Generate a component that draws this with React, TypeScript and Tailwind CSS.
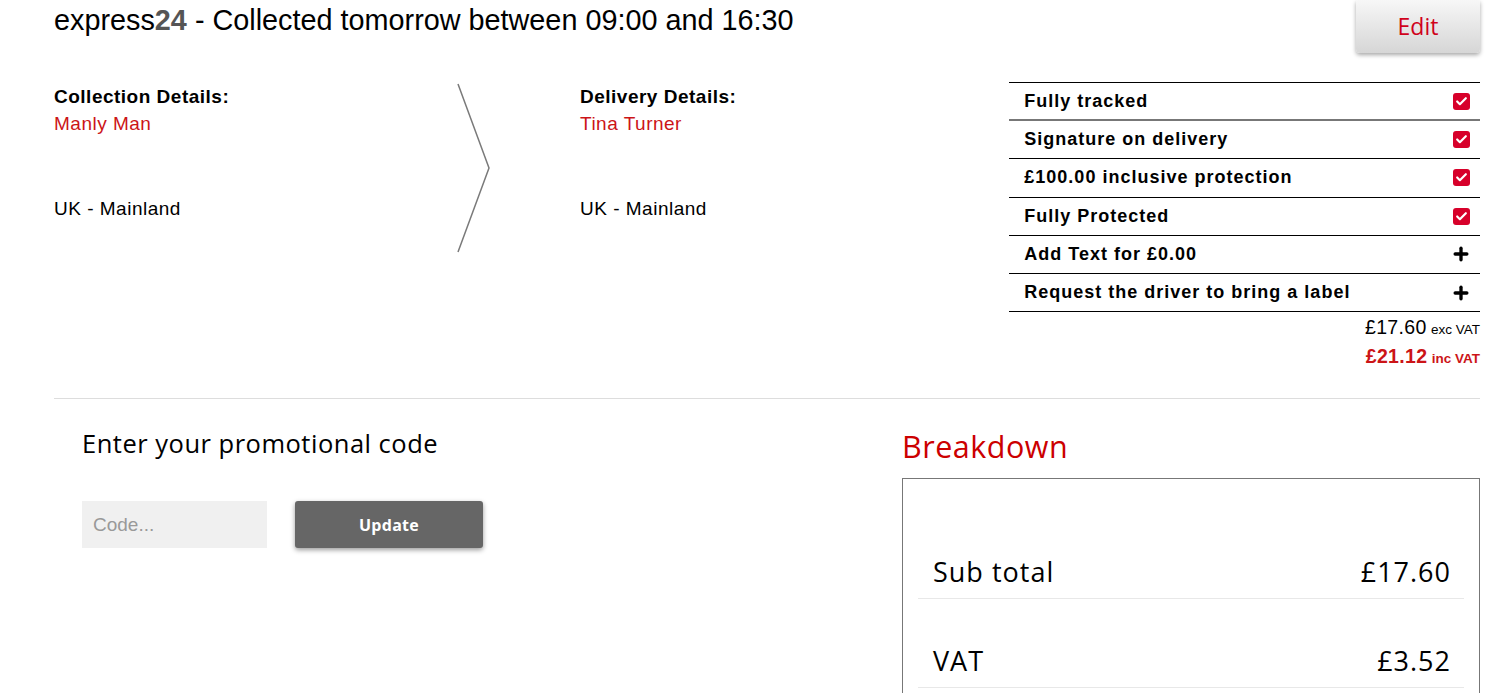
import { Check, Plus } from 'lucide-react';

const options = [
  { label: 'Fully tracked', checked: true },
  { label: 'Signature on delivery', checked: true },
  { label: '£100.00 inclusive protection', checked: true },
  { label: 'Fully Protected', checked: true },
  { label: 'Add Text for £0.00', checked: false },
  { label: 'Request the driver to bring a label', checked: false },
];

function Chevron() {
  return (
    <svg width="40" height="172" viewBox="0 0 40 172" className="shrink-0">
      <path d="M4 2 L35 86 L4 170" fill="none" stroke="#7a7a7a" strokeWidth="1.5" />
    </svg>
  );
}

function Address({ title, name, region }: { title: string; name: string; region: string }) {
  return (
    <div className="flex flex-col tracking-[0.5px]">
      <div className="text-[19px] font-bold leading-[22px] text-black">{title}</div>
      <div className="mt-[5px] text-[19px] leading-[22px] text-[#cc1417]">{name}</div>
      <div className="mt-[63px] text-[19px] leading-[22px] text-black">{region}</div>
    </div>
  );
}

export default function App() {
  return (
    <div className="min-h-screen bg-white pl-[54px] pr-[20px] font-['Liberation_Sans',Arial,sans-serif] text-black">
      {/* top section */}
      <div className="flex justify-between">
        <h1 className="pt-[4px] text-[28.8px] leading-[32px] font-normal">
          express<span className="font-bold text-[#555]">24</span> - Collected tomorrow between 09:00 and 16:30
        </h1>
        <button className="h-[53px] w-[124px] rounded-b-[4px] rounded-t-[2px] bg-gradient-to-b from-[#f7f7f7] to-[#d6d6d6] text-[23px] text-[#d0021b] shadow-[0_2px_4px_rgba(0,0,0,0.35)] font-['Open_Sans',sans-serif]">
          Edit
        </button>
      </div>

      <div className="mt-[29px] flex">
        <div className="flex w-[956px]">
          <div className="w-[400px] pt-[4px]">
            <Address title="Collection Details:" name="Manly Man" region="UK - Mainland" />
          </div>
          <Chevron />
          <div className="ml-[86px] pt-[4px]">
            <Address title="Delivery Details:" name="Tina Turner" region="UK - Mainland" />
          </div>
        </div>

        <div className="w-[471px]">
          <div className="border-t-[1.5px] border-black">
            {options.map((o, i) => (
              <div
                key={o.label}
                className={`flex h-[38.2px] items-center justify-between pl-[15px] pr-[10px] ${
                  i === 0 ? 'border-b-[2px] border-[#777]' : 'border-b-[1.5px] border-black'
                }`}
              >
                <span className="text-[18px] font-bold tracking-[1px]">{o.label}</span>
                {o.checked ? (
                  <span className="flex h-[17px] w-[17px] items-center justify-center rounded-[3px] bg-[#d7002a]">
                    <Check size={13} strokeWidth={4} className="text-white" />
                  </span>
                ) : (
                  <Plus size={20} strokeWidth={4} className="mr-[-1px] text-black" />
                )}
              </div>
            ))}
          </div>
          <div className="mt-[2px] text-right leading-[26px]">
            <div>
              <span className="text-[19.5px] tracking-[0.3px]">£17.60</span>{' '}
              <span className="text-[13.5px]">exc VAT</span>
            </div>
            <div className="font-bold text-[#cc1417]">
              <span className="text-[19.5px] tracking-[0.3px]">£21.12</span>{' '}
              <span className="text-[13.5px]">inc VAT</span>
            </div>
          </div>
        </div>
      </div>

      <div className="mt-[26px] border-t border-[#dddddd]" />

      {/* lower section */}
      <div className="flex font-['Open_Sans',sans-serif]">
        <div className="w-[848px] pl-[28px]">
          <h2 className="mt-[28px] text-[25.5px] leading-[32px] tracking-[0.5px] text-black">Enter your promotional code</h2>
          <div className="mt-[42px] flex items-center gap-[28px]">
            <input
              placeholder="Code..."
              className="h-[47px] w-[185px] bg-[#f0f0f0] px-[11px] text-[19px] font-['Liberation_Sans',Arial,sans-serif] text-black placeholder:text-[#999] outline-none"
            />
            <button className="h-[47px] w-[188px] rounded-[3px] bg-[#666666] text-[16px] font-bold tracking-[0.3px] text-white shadow-[0_2px_5px_rgba(0,0,0,0.4)]">
              Update
            </button>
          </div>
        </div>

        <div className="flex-1">
          <h2 className="mt-[29px] text-[30.5px] leading-[36px] tracking-[0.5px] text-[#cc0000]">Breakdown</h2>
          <div className="mt-[14px] border border-[#777] px-[15px] pt-[76px]">
            <div className="flex items-end justify-between border-b border-[#e8e8e8] pl-[15px] pr-[13px] pb-[9px] text-[27px] leading-[34px] tracking-[1px]">
              <span>Sub total</span>
              <span>£17.60</span>
            </div>
            <div className="flex items-end justify-between border-b border-[#e8e8e8] pl-[15px] pr-[13px] pb-[9px] pt-[45px] text-[27px] leading-[34px] tracking-[1px]">
              <span>VAT</span>
              <span>£3.52</span>
            </div>
            <div className="h-[60px]" />
          </div>
        </div>
      </div>
    </div>
  );
}
